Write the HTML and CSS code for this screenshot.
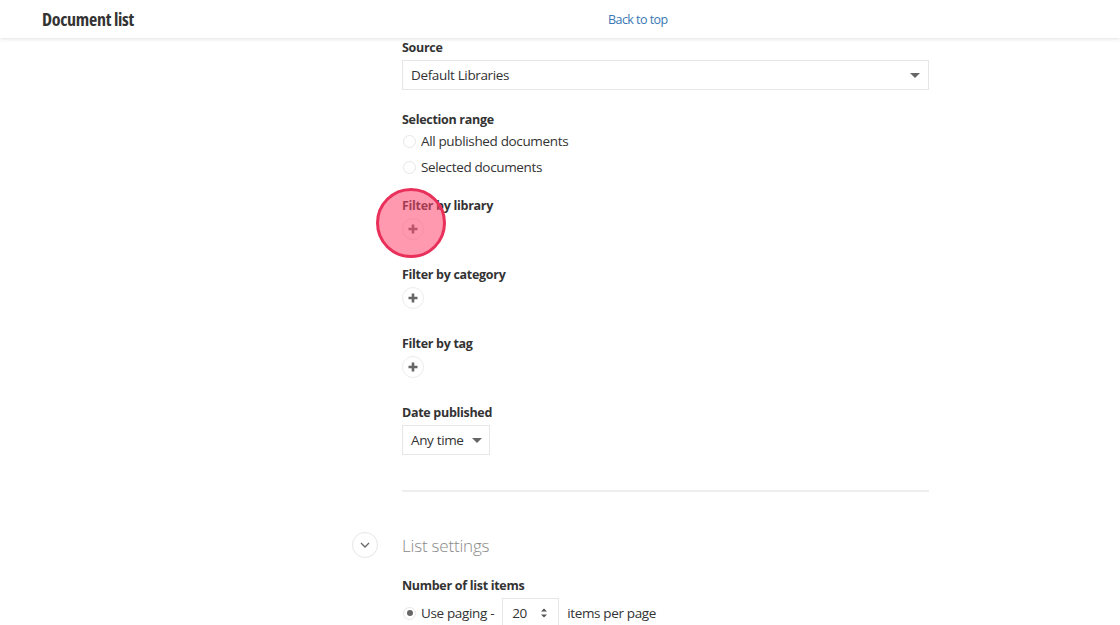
FILE: index.html
```html
<!DOCTYPE html>
<html>
<head>
<meta charset="utf-8">
<link rel="stylesheet" href="styles.css">
</head>
<body>
<header class="topbar">
  <div class="title">Document list</div>
  <a class="backlink" href="#">Back to top</a>
</header>
<main class="page">
  <div class="column">
    <section class="field source">
      <div class="label">Source</div>
      <div class="select wide"><span>Default Libraries</span><span class="caret"></span></div>
    </section>
    <section class="field range">
      <div class="label">Selection range</div>
      <div class="radio-row"><span class="radio"></span><span>All published documents</span></div>
      <div class="radio-row"><span class="radio"></span><span>Selected documents</span></div>
    </section>
    <section class="field filter">
      <div class="label">Filter by library</div>
      <div class="addwrap"><span class="addbtn"><svg viewBox="0 0 10 10" width="10" height="10"><path d="M5 0.5v9M0.5 5h9" stroke="#666" stroke-width="2.6"/></svg></span><span class="touch"></span></div>
    </section>
    <section class="field filter">
      <div class="label">Filter by category</div>
      <div class="addwrap"><span class="addbtn"><svg viewBox="0 0 10 10" width="10" height="10"><path d="M5 0.5v9M0.5 5h9" stroke="#666" stroke-width="2.6"/></svg></span></div>
    </section>
    <section class="field filter">
      <div class="label">Filter by tag</div>
      <div class="addwrap"><span class="addbtn"><svg viewBox="0 0 10 10" width="10" height="10"><path d="M5 0.5v9M0.5 5h9" stroke="#666" stroke-width="2.6"/></svg></span></div>
    </section>
    <section class="field">
      <div class="label">Date published</div>
      <div class="select narrow"><span>Any time</span><span class="caret"></span></div>
    </section>
    <hr class="divider">
    <section class="settings">
      <div class="settings-head">
        <span class="toggle"><svg viewBox="0 0 10 6" width="10" height="6"><path d="M1 1l4 4 4-4" fill="none" stroke="#666" stroke-width="1.3"/></svg></span>
        <span class="settings-title">List settings</span>
      </div>
      <div class="label">Number of list items</div>
      <div class="paging-row">
        <span class="radio checked"></span>
        <span>Use paging -</span>
        <span class="numbox"><span>20</span><svg viewBox="0 0 8 12" width="8" height="12"><path d="M1 4.5L4 1.5L7 4.5Z M1 7.5L4 10.5L7 7.5Z" fill="#555"/></svg></span>
        <span>items per page</span>
      </div>
    </section>
  </div>
</main>
</body>
</html>
```
FILE: styles.css
```css
* { box-sizing: border-box; }
html, body { margin: 0; padding: 0; }
body {
  font-family: "Open Sans", "Liberation Sans", sans-serif;
  color: #333;
  background: #fff;
  width: 1120px;
  height: 625px;
  overflow: hidden;
}
.topbar {
  height: 38px;
  display: flex;
  align-items: center;
  padding: 0 42px;
  background: #fff;
  box-shadow: 0 1px 4px rgba(0,0,0,0.12);
  position: relative;
  z-index: 2;
}
.title {
  width: 566px;
  font-size: 18px;
  font-weight: 700;
  font-stretch: 80%;
  letter-spacing: -0.3px;
  color: #333;
}
.backlink {
  font-size: 12.5px;
  letter-spacing: -0.55px;
  color: #3a78b5;
  text-decoration: none;
}
.page {
  display: flex;
  padding-left: 402px;
}
.column {
  width: 527px;
  padding-top: 1px;
}
.label {
  font-size: 12.5px;
  letter-spacing: -0.3px;
  font-weight: 700;
  line-height: 18px;
  color: #333;
}
.field { margin-bottom: 19px; }
.field.source { margin-bottom: 21px; }
.field.range { margin-bottom: 17px; }
.field.range .label { margin-bottom: -1px; }
.select {
  margin-top: 3px;
  height: 30px;
  border: 1px solid #e6e6e6;
  display: flex;
  align-items: center;
  justify-content: space-between;
  gap: 8px;
  padding: 0 8px 1px 8px;
  font-size: 13.5px;
  letter-spacing: -0.35px;
  color: #333;
  white-space: nowrap;
}
.select.wide { width: 527px; }
.select.narrow { width: 88px; }
.caret {
  flex: none;
  width: 0; height: 0;
  border-left: 5px solid transparent;
  border-right: 5px solid transparent;
  border-top: 5px solid #666;
  margin-top: 2px;
}
.radio-row {
  display: flex;
  align-items: center;
  gap: 5px;
  font-size: 13.5px;
  letter-spacing: -0.35px;
  height: 26px;
}
.radio {
  width: 13px; height: 13px;
  border-radius: 50%;
  border: 1px solid #e6e6e6;
  margin-left: 1px;
  display: inline-block;
  position: relative;
  flex: none;
}
.radio.checked::after {
  content: "";
  position: absolute;
  left: 2.5px; top: 2.5px;
  width: 6px; height: 6px;
  border-radius: 50%;
  background: #666;
}
.field.filter { margin-bottom: 26px; }
.addwrap {
  margin-top: 3px;
  position: relative;
  height: 22px;
}
.addbtn {
  width: 22px; height: 22px;
  border-radius: 50%;
  border: 1px solid #ececec;
  display: flex;
  align-items: center;
  justify-content: center;
  background: #fff;
}
.touch {
  position: absolute;
  left: -26px;
  top: -30px;
  width: 70px;
  height: 70px;
  border-radius: 50%;
  background: rgba(255, 70, 110, 0.55);
  border: 3px solid #e8305a;
}
.divider {
  border: none;
  border-top: 2px solid #eeeeee;
  margin: 35px 0 0 0;
}
.settings { padding-top: 39px; }
.settings-head {
  display: flex;
  align-items: center;
  position: relative;
  height: 28px;
  margin-bottom: 18px;
}
.toggle {
  position: absolute;
  left: -50px;
  top: 1px;
  width: 26px; height: 26px;
  border-radius: 50%;
  border: 1px solid #e6e6e6;
  display: flex;
  align-items: center;
  justify-content: center;
}
.settings-title {
  font-size: 17px;
  letter-spacing: -0.2px;
  font-weight: 300;
  color: #888;
}
.paging-row {
  display: flex;
  align-items: center;
  gap: 5px;
  font-size: 13.5px;
  letter-spacing: -0.35px;
  margin-top: 3px;
  height: 30px;
}
.numbox {
  width: 57px;
  height: 30px;
  border: 1px solid #e6e6e6;
  display: flex;
  align-items: center;
  justify-content: space-between;
  padding: 0 10px 0 9px;
  margin: 0 3px;
}
```
